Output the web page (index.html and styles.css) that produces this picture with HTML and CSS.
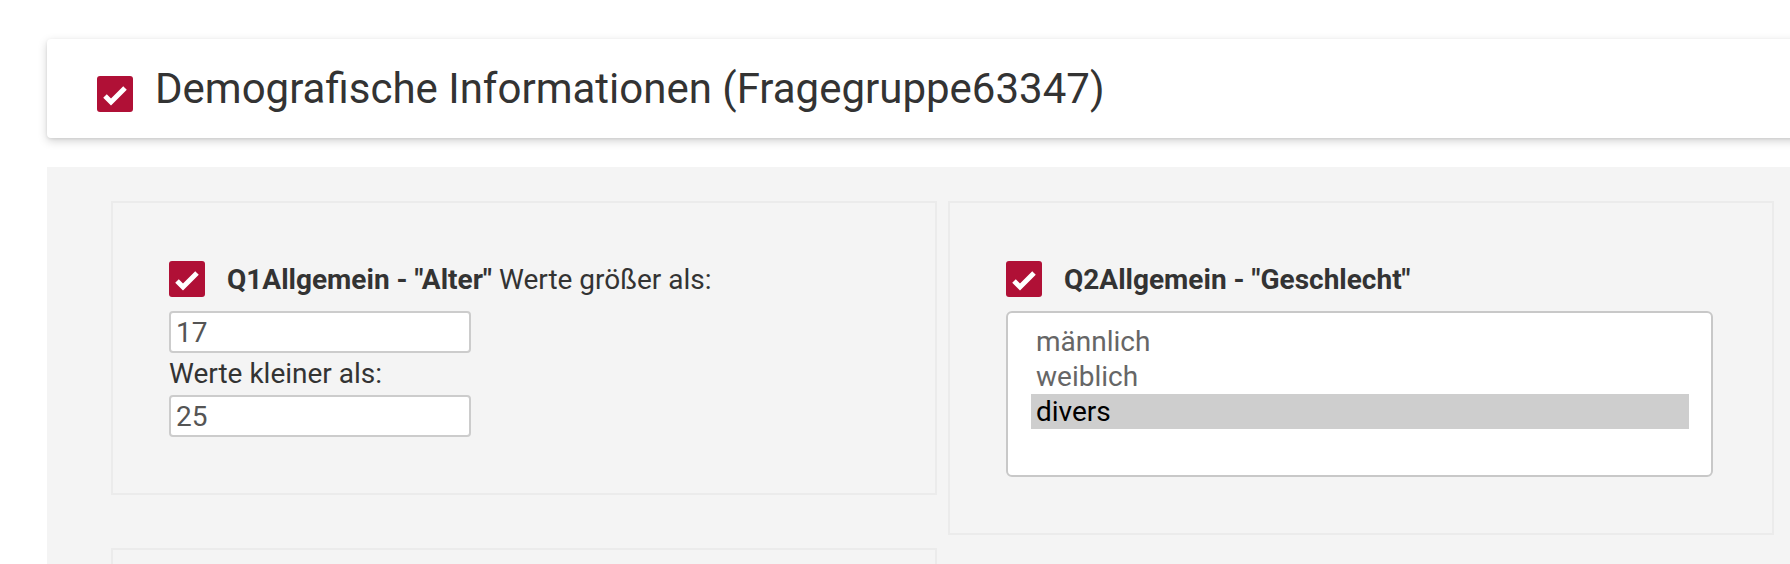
FILE: index.html
```html
<!DOCTYPE html>
<html lang="de">
<head>
  <meta charset="UTF-8" />
  <title>Statistik - Fragegruppe</title>
  <link rel="stylesheet" href="styles.css">
</head>
<body>

  <div class="page">
    <div class="group-header">
      <span class="check">
        <svg viewBox="0 0 36 36" width="36" height="36"><polyline points="8,20 14,26 28,12" /></svg>
      </span>
      <h2 class="group-title">Demografische Informationen (Fragegruppe63347)</h2>
    </div>

    <div class="group-body">
      <div class="question-grid">

        <div class="question-card">
          <div class="question-label">
            <span class="check">
              <svg viewBox="0 0 36 36" width="36" height="36"><polyline points="8,20 14,26 28,12" /></svg>
            </span>
            <span><b>Q1Allgemein - "Alter"</b> Werte größer als:</span>
          </div>
          <input class="text-field" type="text" value="17">
          <label class="field-label">Werte kleiner als:</label>
          <input class="text-field" type="text" value="25">
        </div>

        <div class="question-card">
          <div class="question-label">
            <span class="check">
              <svg viewBox="0 0 36 36" width="36" height="36"><polyline points="8,20 14,26 28,12" /></svg>
            </span>
            <span><b>Q2Allgemein - "Geschlecht"</b></span>
          </div>
          <ul class="listbox">
            <li>männlich</li>
            <li>weiblich</li>
            <li class="selected">divers</li>
          </ul>
        </div>

        <div class="question-card empty"></div>

      </div>
    </div>
  </div>

</body>
</html>
```

FILE: styles.css
```css
body { margin: 0; background: #fff; font-family: Roboto, "Liberation Sans", sans-serif; color: #333; }
.page { overflow: hidden; padding: 39px 0 0 47px; height: 525px; }

.group-header { display: flex; align-items: center; gap: 22px; height: 99px; margin-right: -20px; padding-left: 50px; background: #fff; border-radius: 4px; box-shadow: 0 3px 10px rgba(0, 0, 0, 0.18), 0 1px 3px rgba(0, 0, 0, 0.08); }
.group-header .check { margin-top: 10px; }
.group-title { margin: 0; font-size: 42px; font-weight: 400; color: #333; }

.check { flex: none; display: inline-flex; width: 36px; height: 36px; background: #b01036; border-radius: 3px; }
.check polyline { fill: none; stroke: #fff; stroke-width: 5; }

.group-body { margin-top: 29px; margin-right: -20px; padding: 34px 0 40px 64px; background: #f4f4f4; }
.question-grid { display: grid; grid-template-columns: 826px 826px; column-gap: 11px; row-gap: 13px; align-items: start; }
.question-card { border: 2px solid #ebebeb; padding: 58px 56px 56px; }
.question-card.empty { height: 200px; }

.question-label { display: flex; align-items: center; gap: 22px; font-size: 28px; margin-bottom: 14px; }
.question-label b { font-weight: 700; }

.text-field { display: block; box-sizing: border-box; width: 302px; height: 42px; padding: 0 5px; border: 2px solid #ccc; border-radius: 4px; font-family: Roboto, sans-serif; font-size: 28px; color: #555; background: #fff; }
.field-label { display: block; font-size: 28px; line-height: 42px; }

.listbox { list-style: none; box-sizing: border-box; width: 707px; height: 166px; margin: 0; padding: 11px 22px 0 23px; background: #fff; border: 2px solid #c8c8c8; border-radius: 6px; font-size: 28px; line-height: 35px; color: #666; }
.listbox li { padding-left: 5px; }
.listbox li.selected { background: #cecece; color: #000; }
```
